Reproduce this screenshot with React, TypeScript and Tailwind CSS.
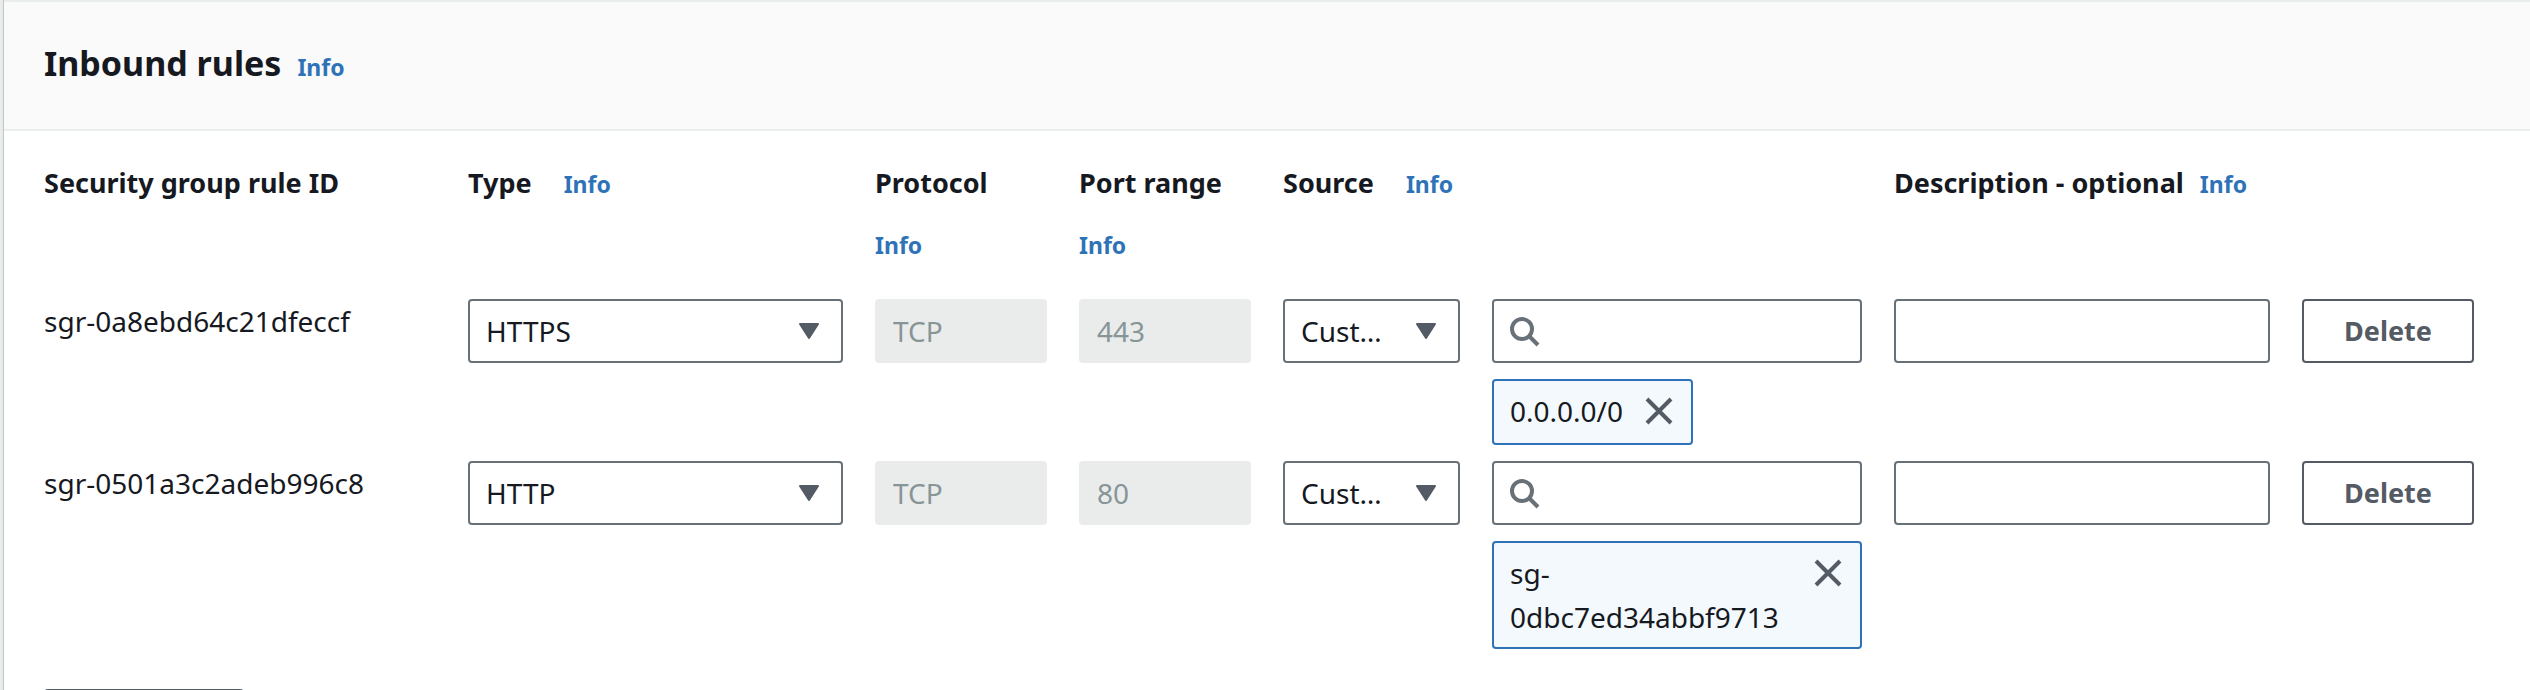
import { useId, type ReactNode } from "react";

const columns =
  "grid grid-cols-[392fr_375fr_172fr_172fr_177fr_370fr_376fr_172fr] gap-x-8";

const controlBox = "h-16 w-full min-w-0 rounded-[4px] border-2 border-[#687078] bg-white";

type Rule = {
  id: string;
  type: string;
  protocol: string;
  port: string;
  source: string;
};

const rules: Rule[] = [
  { id: "sgr-0a8ebd64c21dfeccf", type: "HTTPS", protocol: "TCP", port: "443", source: "0.0.0.0/0" },
  { id: "sgr-0501a3c2adeb996c8", type: "HTTP", protocol: "TCP", port: "80", source: "sg-0dbc7ed34abbf9713" },
];

function InfoLink() {
  return (
    <a href="#info" className="text-[23px] leading-11 font-bold text-[#2e73b8]">
      Info
    </a>
  );
}

function HeaderCell({ title, info, tight }: { title: string; info?: boolean; tight?: boolean }) {
  return (
    <th
      scope="col"
      className={`flex min-w-0 flex-wrap content-start items-baseline gap-y-[18px] text-left text-[27px] leading-11 font-bold ${
        tight ? "gap-x-4" : "gap-x-8"
      }`}
    >
      <span className="whitespace-nowrap">{title}</span>
      {info && <InfoLink />}
    </th>
  );
}

function Select({ label, value }: { label: string; value: string }) {
  return (
    <div className="relative">
      <select
        aria-label={label}
        defaultValue={value}
        className={`${controlBox} appearance-none truncate pr-18 pl-4`}
      >
        <option>{value}</option>
      </select>
      <svg
        viewBox="0 0 20 16"
        className="pointer-events-none absolute top-6 right-6 h-4 w-5 fill-[#545b64] stroke-[#545b64]"
        strokeWidth="2"
        strokeLinejoin="round"
      >
        <path d="M1 1h18L10 15z" />
      </svg>
    </div>
  );
}

function DisabledInput({ label, value }: { label: string; value: string }) {
  return (
    <input
      aria-label={label}
      value={value}
      disabled
      className="h-16 w-full min-w-0 rounded-[4px] bg-[#eaecec] px-[18px] text-[#879596]"
    />
  );
}

function SearchInput() {
  const id = useId();
  return (
    <div className="relative">
      <label htmlFor={id} aria-label="Source" className="absolute top-4 left-4">
        <svg viewBox="0 0 16 16" className="size-8 fill-none stroke-[#687078]" strokeWidth="2">
          <circle cx="7" cy="7" r="5" />
          <path d="m15 15-4.5-4.5" />
        </svg>
      </label>
      <input id={id} type="text" className={`${controlBox} pr-4 pl-14`} />
    </div>
  );
}

function Token({ children }: { children: ReactNode }) {
  return (
    <div className="flex min-h-[66px] max-w-full items-start justify-between gap-5 self-start rounded-[4px] border-2 border-[#2e73b8] bg-[#f3f9fd] px-4 py-2">
      <span className="min-w-0 leading-11">{children}</span>
      <button type="button" aria-label="Remove" className="flex h-11 shrink-0 items-center">
        <svg viewBox="0 0 16 16" className="size-8 fill-none stroke-[#545b64]" strokeWidth="2">
          <path d="m2 2 12 12M14 2 2 14" />
        </svg>
      </button>
    </div>
  );
}

export default function App() {
  return (
    <main className="h-screen overflow-hidden bg-[#eaeded] pl-1 font-['Noto_Sans',sans-serif] text-[28px] text-[#16191f]">
      <section className="min-h-full border-t-2 border-[#eaeded] bg-white shadow-[-1px_0_1px_#c3c8c8]">
        <header className="flex items-baseline gap-4 border-b-2 border-[#eaeded] bg-[#fafafa] px-10 pt-9 pb-10">
          <h2 className="text-[34px] leading-[50px] font-bold">Inbound rules</h2>
          <InfoLink />
        </header>
        <table className="block pt-[30px] pr-14 pl-10">
          <thead className="block">
            <tr className={columns}>
              <HeaderCell title="Security group rule ID" />
              <HeaderCell title="Type" info />
              <HeaderCell title="Protocol" info />
              <HeaderCell title="Port range" info />
              <HeaderCell title="Source" info />
              <th />
              <HeaderCell title="Description - optional" info tight />
              <th />
            </tr>
          </thead>
          <tbody className="flex flex-col gap-4 pt-8">
            {rules.map((rule) => (
              <tr key={rule.id} className={columns}>
                <td className="leading-11">{rule.id}</td>
                <td>
                  <Select label="Type" value={rule.type} />
                </td>
                <td>
                  <DisabledInput label="Protocol" value={rule.protocol} />
                </td>
                <td>
                  <DisabledInput label="Port range" value={rule.port} />
                </td>
                <td>
                  <Select label="Source type" value="Custom" />
                </td>
                <td className="flex min-w-0 flex-col gap-4">
                  <SearchInput />
                  <Token>{rule.source}</Token>
                </td>
                <td>
                  <input aria-label="Description" type="text" className={`${controlBox} px-4`} />
                </td>
                <td>
                  <button
                    type="button"
                    className="h-16 w-full rounded-[4px] border-2 border-[#545b64] bg-white text-[27px] font-bold text-[#545b64]"
                  >
                    Delete
                  </button>
                </td>
              </tr>
            ))}
          </tbody>
        </table>
        <div className="px-10 pt-10">
          <button
            type="button"
            aria-label="Add rule"
            className="h-16 w-50 rounded-[4px] border-2 border-[#545b64] bg-white"
          />
        </div>
      </section>
    </main>
  );
}
